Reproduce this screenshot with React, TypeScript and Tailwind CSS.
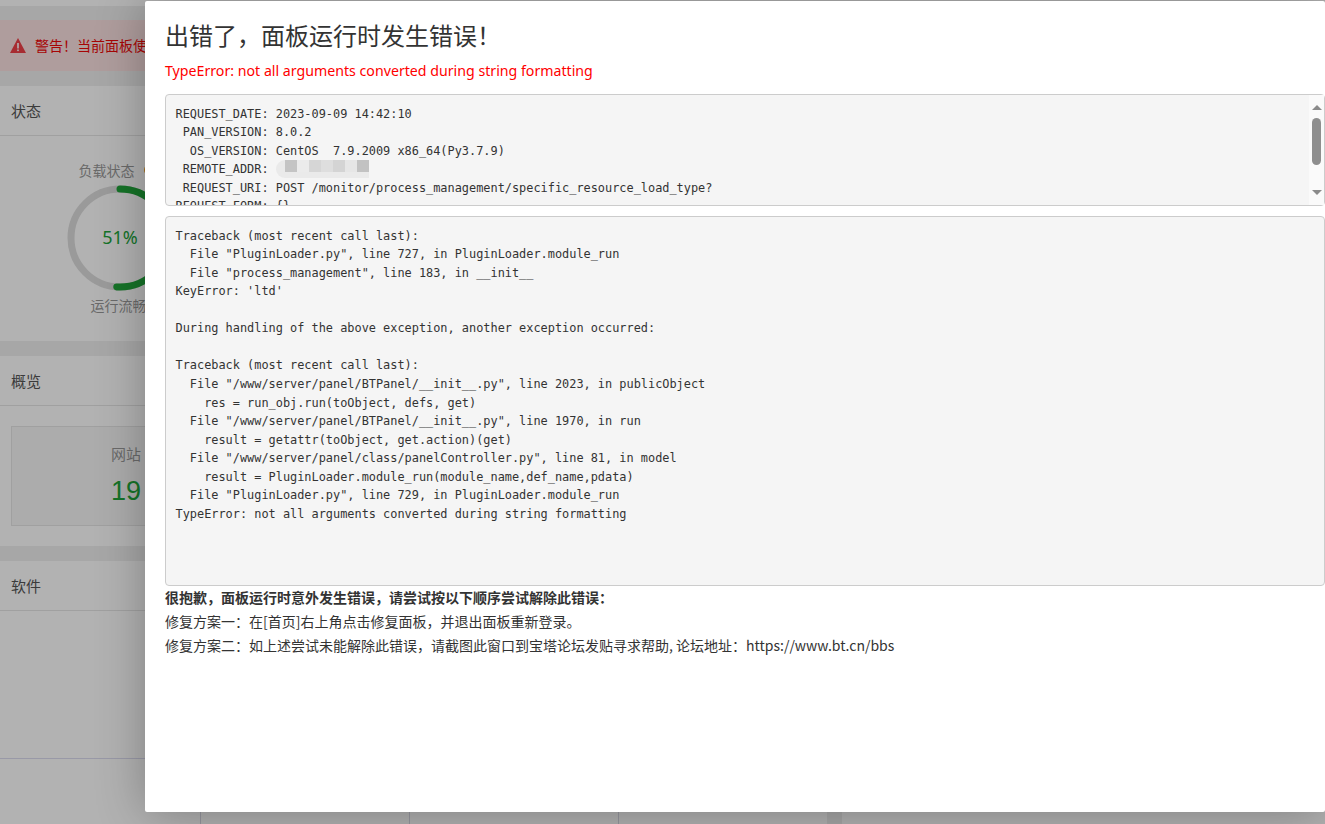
const FONT = "font-['Noto_Sans','Noto_Sans_CJK_SC',sans-serif]";
const CJK = "font-['Noto_Sans_CJK_SC','Noto_Sans',sans-serif]";

const requestText = `REQUEST_DATE: 2023-09-09 14:42:10
 PAN_VERSION: 8.0.2
  OS_VERSION: CentOS  7.9.2009 x86_64(Py3.7.9)
 REMOTE_ADDR: `;
const requestText2 = `
 REQUEST_URI: POST /monitor/process_management/specific_resource_load_type?
REQUEST_FORM: {}`;

const trace = `Traceback (most recent call last):
  File "PluginLoader.py", line 727, in PluginLoader.module_run
  File "process_management", line 183, in __init__
KeyError: 'ltd'

During handling of the above exception, another exception occurred:

Traceback (most recent call last):
  File "/www/server/panel/BTPanel/__init__.py", line 2023, in publicObject
    res = run_obj.run(toObject, defs, get)
  File "/www/server/panel/BTPanel/__init__.py", line 1970, in run
    result = getattr(toObject, get.action)(get)
  File "/www/server/panel/class/panelController.py", line 81, in model
    result = PluginLoader.module_run(module_name,def_name,pdata)
  File "PluginLoader.py", line 729, in PluginLoader.module_run
TypeError: not all arguments converted during string formatting`;

const TITLE = "出错了\uFF0C面板运行时发生错误\uFF01";
const WARN = "警告\uFF01当前面板使用的是HTTP访问";
const LINE1 = "很抱歉\uFF0C面板运行时意外发生错误\uFF0C请尝试按以下顺序尝试解除此错误\uFF1A";
const LINE2 = "修复方案一\uFF1A在[首页]右上角点击修复面板\uFF0C并退出面板重新登录\u3002";
const LINE3 = "修复方案二\uFF1A如上述尝试未能解除此错误\uFF0C请截图此窗口到宝塔论坛发贴寻求帮助, 论坛地址\uFF1Ahttps://www.bt.cn/bbs";

const preClass =
  "m-0 rounded border border-[#cccccc] bg-[#f5f5f5] p-[9.5px] font-['DejaVu_Sans_Mono',monospace] text-[11.9px] leading-[18.57px] text-[#333333] whitespace-pre overflow-hidden";

function CardHeader({ title }: { title: string }) {
  return (
    <div className={`h-[50px] border-b border-[#e6e6e6] pl-[11px] pt-[2px] flex items-center text-[15px] text-[#555555] ${CJK}`}>
      {title}
    </div>
  );
}

function Gauge() {
  return (
    <svg width="112" height="112" viewBox="0 0 112 112" className="block">
      <circle cx="56" cy="56" r="49" fill="none" stroke="#dddddd" strokeWidth="7" />
      <circle
        cx="56"
        cy="56"
        r="49"
        fill="none"
        stroke="#20a53a"
        strokeWidth="7"
        strokeLinecap="round"
        strokeDasharray="157 308"
        transform="rotate(-90 56 56)"
      />
    </svg>
  );
}

function Page() {
  return (
    <div className={`h-full bg-[#f0f0f0] ${CJK}`}>
      <div className="h-[6px] bg-white" />
      <div className="h-[14px]" />
      <div className="h-[51px] bg-[#fbe1e1] pl-[10px] flex items-center gap-[9px] text-[14px] text-[#ef0808]">
        <svg width="16" height="15" viewBox="0 0 16 15">
          <path d="M8 0 L16 15 H0 Z" fill="#f04048" />
          <rect x="7.2" y="5" width="1.6" height="5.5" fill="#fff" />
          <rect x="7.2" y="11.5" width="1.6" height="1.6" fill="#fff" />
        </svg>
        <span>{WARN}</span>
      </div>
      <div className="h-[15px]" />

      <div className="h-[255px] bg-white">
        <CardHeader title="状态" />
        <div className="w-[240px] flex flex-col items-center pt-[24px]">
          <div className="text-[14px] leading-[20px] text-[#999999] flex items-center w-[112px] ml-[1px]">
            <span className="ml-[14px] shrink-0">负载状态</span>
            <span className="ml-[9px] w-[12px] h-[12px] rounded-full bg-[#f0a020] shrink-0" />
          </div>
          <div className="relative mt-[2px]">
            <Gauge />
            <div className={`absolute inset-0 flex items-center justify-center text-[18px] pb-[1px] text-[#20a53a] ${FONT}`}>
              51%
            </div>
          </div>
          <div className="text-[14px] leading-[18px] text-[#999999] mt-[2px] mr-[3px]">运行流畅</div>
        </div>
      </div>
      <div className="h-[15px]" />

      <div className="h-[190px] bg-white">
        <CardHeader title="概览" />
        <div className="mt-[20px] ml-[11px] w-[230px] h-[100px] bg-[#f7f7f7] border border-[#e6e6e6] flex flex-col items-center pt-[17px]">
          <div className="text-[15px] leading-[20px] text-[#999999]">网站</div>
          <div className="text-[27px] leading-[36px] mt-[9px] text-[#20a53a] font-['Liberation_Sans',sans-serif]">19</div>
        </div>
      </div>
      <div className="h-[15px]" />

      <div className="h-[198px] bg-white border-b border-[#dcdcf0]">
        <CardHeader title="软件" />
      </div>

      <div className="flex h-[65px]">
        <div className="w-[200px] bg-white" />
        <div className="w-[209px] bg-white border-l border-[#d8d8e4]" />
        <div className="w-[209px] bg-white border-l border-[#d8d8e4]" />
        <div className="w-[209px] bg-white border-l border-[#d8d8e4]" />
        <div className="w-[15px]" />
        <div className="flex-1 bg-white" />
      </div>
    </div>
  );
}

function Scrollbar() {
  return (
    <div className="absolute right-[1px] top-[1px] bottom-[1px] w-[15px] bg-[#fafafa]">
      <div className="absolute left-[2.5px] top-[10px] w-0 h-0 border-x-[5px] border-x-transparent border-b-[5px] border-b-[#8a8a8a]" />
      <div className="absolute left-[3px] top-[23px] w-[9px] h-[47px] rounded-[5px] bg-[#8e8e8e]" />
      <div className="absolute left-[2.5px] bottom-[10px] w-0 h-0 border-x-[5px] border-x-transparent border-t-[5px] border-t-[#8a8a8a]" />
    </div>
  );
}

function Mosaic() {
  const cells = ["#c4c4c4", "#ebebeb", "#d6d6d6", "#dedede", "#d4d4d4", "#e6e6e6", "#c2c2c2"];
  return (
    <span className="inline-flex align-top h-[18px] pl-[9px] bg-[#eaeaea] rounded-l-full items-start">
      {cells.map((c, i) => (
        <span key={i} className="block w-[12px] h-[12px]" style={{ background: c }} />
      ))}
    </span>
  );
}

export default function App() {
  return (
    <div className="relative w-[1325px] h-[824px] overflow-hidden">
      <Page />
      <div className="absolute inset-0 bg-black/30" />
      <div
        className={`absolute left-[145px] top-[1px] right-0 h-[811px] bg-white rounded-[2px] shadow-[1px_1px_50px_rgba(0,0,0,0.3)] pl-[20px] ${CJK}`}
      >
        <h3 className="m-0 pt-[17px] text-[24px] leading-[34px] text-[#333333] font-normal">{TITLE}</h3>
        <div className={`mt-[9px] text-[14.18px] leading-[20px] text-[#ff0000] ${FONT}`}>
          TypeError: not all arguments converted during string formatting
        </div>
        <div className="relative mt-[13px] h-[112px]">
          <pre className={`${preClass} h-full`}>
            {requestText}
            <Mosaic />
            {requestText2}
          </pre>
          <Scrollbar />
        </div>
        <pre className={`${preClass} mt-[10px] h-[370px]`}>{trace}</pre>
        <div className="mt-[-1px] text-[14px] leading-[24px] text-[#333333]">
          <div className="font-bold">{LINE1}</div>
          <div>{LINE2}</div>
          <div>{LINE3}</div>
        </div>
      </div>
    </div>
  );
}
